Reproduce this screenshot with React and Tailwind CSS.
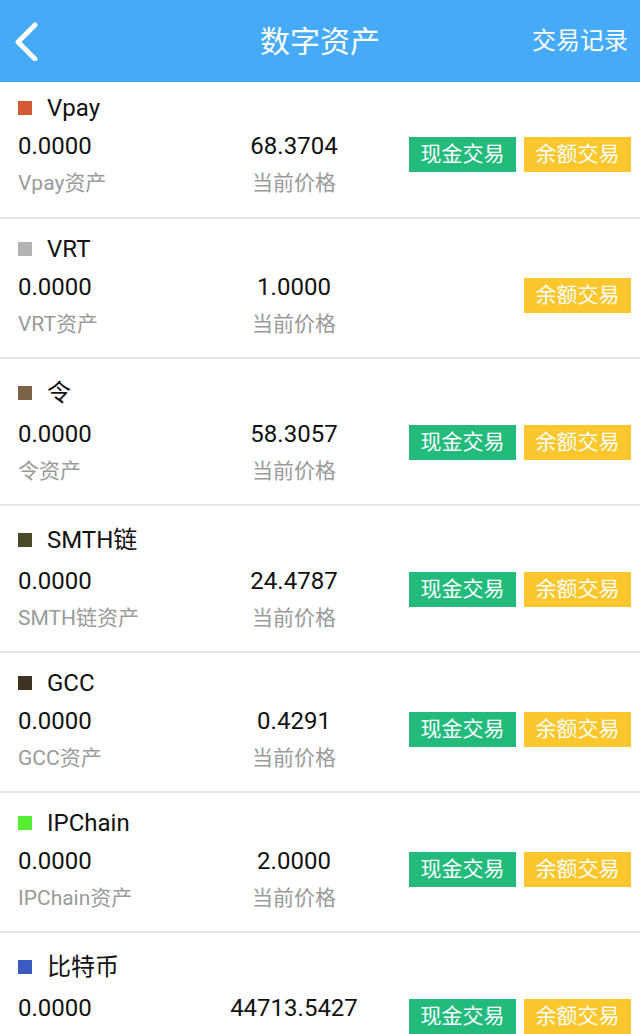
import React from "react";

const assets = [
  { name: "Vpay", color: "bg-[#d45a35]", price: "68.3704", cash: true, cjk: false, first: true },
  { name: "VRT", color: "bg-[#b3b3b3]", price: "1.0000", cash: false, cjk: false },
  { name: "令", color: "bg-[#7a6445]", price: "58.3057", cash: true, cjk: true },
  { name: "SMTH链", color: "bg-[#4a4a2a]", price: "24.4787", cash: true, cjk: true },
  { name: "GCC", color: "bg-[#3e3222]", price: "0.4291", cash: true, cjk: false },
  { name: "IPChain", color: "bg-[#55ee33]", price: "2.0000", cash: true, cjk: false },
  { name: "比特币", color: "bg-[#3a5bc0]", price: "44713.5427", cash: true, cjk: true },
];

const font = { fontFamily: 'Roboto, "Noto Sans CJK SC", sans-serif' };

function Row({ a }) {
  return (
    <div className="border-b-2 border-[#e6e6e6]">
      <div className={a.first ? "pt-[7px] pb-[14px]" : "pt-[11px] pb-[13px]"}>
        <div className={`flex items-center pl-[18px] ${a.cjk ? "h-[45px]" : "h-[38px]"}`}>
          <span className={`w-[14px] h-[14px] ${a.color}`} />
          <span className="ml-[15px] text-[24px] text-[#111]">{a.name}</span>
        </div>
        <div className="flex">
          <div className="w-[218px] pl-[18px]">
            <div className="h-[38px] flex items-center text-[24px] text-[#111]">0.0000</div>
            <div className="h-[38px] flex items-center text-[21px] text-[#9a9a9a]">{a.name}资产</div>
          </div>
          <div className="w-[152px] flex flex-col items-center">
            <div className="h-[38px] flex items-center text-[24px] text-[#111]">{a.price}</div>
            <div className="h-[38px] flex items-center text-[21px] text-[#9a9a9a]">当前价格</div>
          </div>
          <div className="ml-auto pr-[9px] pt-[10px] flex gap-[8px] self-start">
            {a.cash && (
              <div className="w-[107px] h-[35px] bg-[#22bb7c] text-white text-[21px] flex items-center justify-center">
                现金交易
              </div>
            )}
            <div className="w-[107px] h-[35px] bg-[#fcc72c] text-white text-[21px] flex items-center justify-center">
              余额交易
            </div>
          </div>
        </div>
      </div>
    </div>
  );
}

export default function App() {
  return (
    <div className="w-[640px] h-[1034px] overflow-hidden bg-white" style={font}>
      <div className="h-[82px] bg-[#45aaf8] flex items-center relative">
        <div className="w-[60px] pl-[13px] flex items-center">
          <svg width="30" height="40" viewBox="0 0 30 40">
            <polyline points="22,4 5,21 22,38" fill="none" stroke="white" strokeWidth="5" strokeLinecap="round" strokeLinejoin="round" />
          </svg>
        </div>
        <div className="flex-1 text-center text-white text-[30px] pl-[48px]">数字资产</div>
        <div className="pr-[12px] text-white text-[24px]">交易记录</div>
      </div>
      {assets.map((a) => (
        <Row key={a.name} a={a} />
      ))}
    </div>
  );
}
